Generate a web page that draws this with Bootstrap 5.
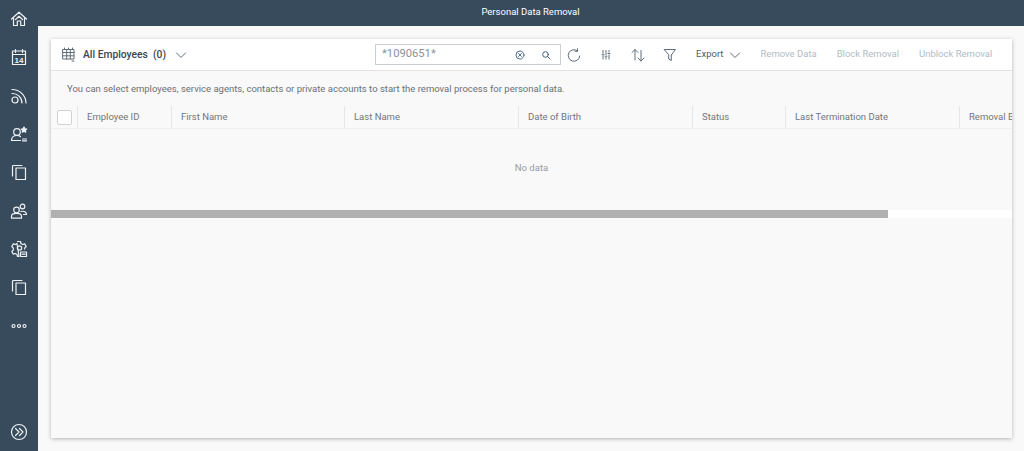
<!DOCTYPE html>
<html lang="en">
<head>
  <meta charset="UTF-8">
  <meta name="viewport" content="width=device-width, initial-scale=1">
  <title>Personal Data Removal</title>
  <link href="https://cdn.jsdelivr.net/npm/bootstrap@5.3.0/dist/css/bootstrap.min.css" rel="stylesheet">
  <style>
    html, body { height: 100%; }
    body { background: #f9f9f9; overflow: hidden; font-family: Roboto, "Liberation Sans", sans-serif; font-size: 9.5px; color: #5b6670; }
    svg { display: block; fill: none; stroke-linecap: round; stroke-linejoin: round; }

    .side-rail { width: 38px; background: #384b5c; color: #eef1f3; }
    .rail-item { height: 38.3px; }
    .rail-item svg { width: 18px; height: 18px; stroke: currentColor; stroke-width: 1.2; }
    .top-title { height: 26px; background: #384b5c; color: #fff; font-size: 9.5px; padding: 0 1px 1px 0; }

    .work-area { padding: 13px 12px 13px 13px; min-height: 0; }
    .removal-card { background: #f9f9f9; box-shadow: 0 1px 4px rgba(0,0,0,.28); min-height: 0; overflow: hidden; }

    .tool-bar { height: 32px; background: #fff; border-bottom: 1px solid #e3e3e3; padding-left: 10px; white-space: nowrap; }
    .view-title { font-weight: 500; color: #3c4650; font-size: 10.3px; margin-left: 7px; }
    .view-chevron { margin-left: 9px; }
    .tool-ico { stroke: #5e6c79; stroke-width: 1; }
    .search-box { width: 186px; height: 21px; border: 1px solid #c9ced2; padding: 0 9px 0 6px; font-size: 11.2px; color: #8b9298; background: #fff; margin-left: 188px; }
    .tool-btn { width: 32px; }
    .export-label { color: #4f5b66; margin-left: 10px; }
    .off-action { color: #b1bcc5; margin-left: 20px; }
    .off-action.first-off { margin-left: 19px; }

    .hint-row { height: 35px; padding: 1px 0 0 16px; color: #6a7076; }
    .head-row { height: 23px; border-bottom: 1px solid #efefef; width: 1000px; }
    .head-cell { height: 22px; border-right: 1px solid #e6e6e6; padding: 1px 0 0 9px; flex: none; color: #70777d; white-space: nowrap; }
    .check-cell { width: 27px; padding: 0 0 0 6px; }
    .fake-check { width: 15px; height: 15px; border: 1px solid #cfd3d6; border-radius: 2px; background: #fff; }
    .no-data { height: 81px; padding-bottom: 3px; color: #979c9f; }
    .scroll-track { height: 8px; background: #fff; }
    .scroll-thumb { width: 837px; background: #b0b0b0; }
  </style>
</head>
<body>
  <div class="d-flex h-100">
    <!-- left rail -->
    <nav class="side-rail d-flex flex-column flex-shrink-0">
      <div class="rail-item d-flex align-items-center justify-content-center">
        <svg viewBox="0 0 18 18"><path d="M1.500 9 9 2.200 16.500 9M3.500 7.500v8h3.800v-4.500h3.400v4.500h3.800v-8"/><path d="M5.500 9.500 9 6.300l3.500 3.200"/></svg>
      </div>
      <div class="rail-item d-flex align-items-center justify-content-center">
        <svg viewBox="0 0 18 18"><path d="M2.500 3h13v13.500h-13zM2.500 6.500h13M5.500 1.500v3M12.500 1.500v3"/><text x="9" y="14.800" text-anchor="middle" font-size="8" font-weight="700" fill="currentColor" stroke="none" font-family="Liberation Sans">14</text></svg>
      </div>
      <div class="rail-item d-flex align-items-center justify-content-center">
        <svg viewBox="0 0 18 18"><circle cx="5" cy="13" r="3"/><path d="M2 6.500a9.500 9.500 0 0 1 10 9.500M2 2.500a13.800 13.800 0 0 1 14 13.500"/></svg>
      </div>
      <div class="rail-item d-flex align-items-center justify-content-center">
        <svg viewBox="0 0 18 18"><circle cx="7" cy="7" r="3.300"/><path d="M1.500 15.500c0-3.500 2-5 5.500-5 1.500 0 2.700.3 3.500 1M1.500 15.500h9"/><path d="M14 2l.8 1.800 1.900.2-1.400 1.300.4 1.900-1.700-1-1.700 1 .4-1.900L11.300 4l1.900-.2z" fill="currentColor"/><path d="M12.500 14h4M12.500 15.800h4"/></svg>
      </div>
      <div class="rail-item d-flex align-items-center justify-content-center">
        <svg viewBox="0 0 18 18"><path d="M12 2.500H3.500a1 1 0 0 0-1 1V13"/><path d="M6 5h9.500v11.500H6z"/></svg>
      </div>
      <div class="rail-item d-flex align-items-center justify-content-center">
        <svg viewBox="0 0 18 18"><circle cx="6.500" cy="8" r="2.800"/><path d="M1.500 16.200v-2c0-1.800 2-2.800 5-2.800s5 1 5 2.800v2z"/><circle cx="12.500" cy="4.500" r="2.300"/><path d="M11 9.500c3-.8 5.500.5 5.500 3h-3"/></svg>
      </div>
      <div class="rail-item d-flex align-items-center justify-content-center">
        <svg viewBox="0 0 18 18"><path d="M7.500 1.500h3l.5 2 1.700 1 2-.6 1.500 2.600-1.500 1.400v1.200M9 16.500H7.500l-.5-2-1.700-1-2 .6-1.500-2.600 1.500-1.400v-2L1.800 6.500l1.500-2.600 2 .6L7 3.500z"/><circle cx="9.500" cy="8" r="2.200"/><path d="M10.500 12h6v4.500h-6zM12 14.200h3"/></svg>
      </div>
      <div class="rail-item d-flex align-items-center justify-content-center">
        <svg viewBox="0 0 18 18"><path d="M12 2.500H3.500a1 1 0 0 0-1 1V13"/><path d="M6 5h9.500v11.500H6z"/></svg>
      </div>
      <div class="rail-item d-flex align-items-center justify-content-center">
        <svg viewBox="0 0 18 18"><circle cx="3.500" cy="9" r="1.500"/><circle cx="9" cy="9" r="1.500"/><circle cx="14.500" cy="9" r="1.500"/></svg>
      </div>
      <div class="rail-item d-flex align-items-center justify-content-center mt-auto">
        <svg viewBox="0 0 18 18"><circle cx="9" cy="9" r="7.500"/><path d="M5.500 5.500 9 9l-3.500 3.500M9.500 5.500 13 9l-3.500 3.500"/></svg>
      </div>
    </nav>

    <div class="d-flex flex-column flex-grow-1" style="min-width:0">
      <header class="top-title d-flex align-items-center justify-content-center flex-shrink-0">Personal Data Removal</header>

      <main class="work-area d-flex flex-column flex-grow-1">
        <section class="removal-card flex-grow-1">
          <!-- toolbar -->
          <div class="tool-bar d-flex align-items-center">
            <svg class="tool-ico flex-shrink-0" width="15" height="15" viewBox="0 0 15 15"><path d="M2 2.500h11v9.500H2zM2 5.500h11M2 8.800h11M5.700 2.500V12M9.300 2.500V12M3.500 1v1M7.500 1v1M11.500 1v1M11 14h2"/></svg>
            <span class="view-title">All Employees &nbsp;(0)</span>
            <svg class="tool-ico view-chevron flex-shrink-0" width="12" height="12" viewBox="0 0 12 12"><path d="M1.500 4 6 8.500 10.500 4"/></svg>

            <div class="search-box d-flex align-items-center flex-shrink-0">
              <span class="flex-grow-1">*1090651*</span>
              <svg class="tool-ico me-3" width="10" height="10" viewBox="0 0 10 10" style="stroke:#4d6f91"><circle cx="5" cy="5" r="4"/><path d="M3.500 3.500l3 3M6.500 3.500l-3 3"/></svg>
              <svg class="tool-ico" width="10" height="10" viewBox="0 0 10 10" style="stroke:#3f5f7f"><circle cx="4.500" cy="4.500" r="2.800"/><path d="M6.500 6.500 9 9"/></svg>
            </div>

            <div class="tool-btn d-flex justify-content-center flex-shrink-0" style="width:26px">
              <svg class="tool-ico" width="14" height="14" viewBox="0 0 14 14"><path d="M10.500 2.800A5.800 5.800 0 1 0 12.800 8M10.500.8v2.500H8"/></svg>
            </div>
            <div class="tool-btn d-flex justify-content-center flex-shrink-0" style="margin-left:3px">
              <svg class="tool-ico" width="12" height="12" viewBox="0 0 12 12"><path d="M3 1.500v2.500M3 6.500v3.500M6 1.500v4M6 8.500v1.500M9 1.500v1.500M9 6v4M2 5.300h2M5 7.200h2M8 4.500h2"/></svg>
            </div>
            <div class="tool-btn d-flex justify-content-center flex-shrink-0">
              <svg class="tool-ico" width="14" height="14" viewBox="0 0 14 14"><path d="M4 12V1.500M1 4.500l3-3 3 3M10 2.500V13M7 10l3 3 3-3"/></svg>
            </div>
            <div class="tool-btn d-flex justify-content-center flex-shrink-0">
              <svg class="tool-ico" width="14" height="14" viewBox="0 0 14 14"><path d="M1.500 1.500h11L8.300 7v5.500l-2.600-1.500V7z"/></svg>
            </div>

            <span class="export-label">Export</span>
            <svg class="tool-ico flex-shrink-0" style="margin-left:6px" width="12" height="12" viewBox="0 0 12 12"><path d="M1.500 4 6 8.500 10.500 4"/></svg>
            <span class="off-action first-off">Remove Data</span>
            <span class="off-action">Block Removal</span>
            <span class="off-action">Unblock Removal</span>
          </div>

          <div class="hint-row d-flex align-items-center">You can select employees, service agents, contacts or private accounts to start the removal process for personal data.</div>

          <div class="head-row d-flex">
            <div class="head-cell check-cell d-flex align-items-center"><span class="fake-check"></span></div>
            <div class="head-cell d-flex align-items-center" style="width:94px">Employee ID</div>
            <div class="head-cell d-flex align-items-center" style="width:173px">First Name</div>
            <div class="head-cell d-flex align-items-center" style="width:174px">Last Name</div>
            <div class="head-cell d-flex align-items-center" style="width:174px">Date of Birth</div>
            <div class="head-cell d-flex align-items-center" style="width:93px">Status</div>
            <div class="head-cell d-flex align-items-center" style="width:174px">Last Termination Date</div>
            <div class="head-cell d-flex align-items-center" style="width:174px">Removal Blocked</div>
          </div>

          <div class="no-data d-flex align-items-center justify-content-center">No data</div>

          <div class="scroll-track d-flex"><div class="scroll-thumb"></div></div>
        </section>
      </main>
    </div>
  </div>
  <script src="https://cdn.jsdelivr.net/npm/bootstrap@5.3.0/dist/js/bootstrap.bundle.min.js"></script>
</body>
</html>
